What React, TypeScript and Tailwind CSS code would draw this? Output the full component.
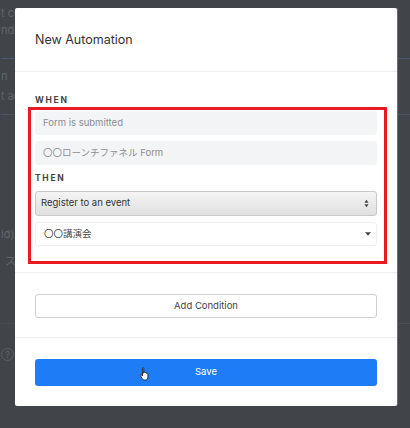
function SortArrows() {
  return (
    <svg width="5" height="9" viewBox="0 0 6 10" className="text-[#444]">
      <path d="M3 0.5 L5.5 4 H0.5 Z" fill="currentColor" />
      <path d="M3 9.5 L5.5 6 H0.5 Z" fill="currentColor" />
    </svg>
  );
}

function HandCursor() {
  return (
    <svg width="12" height="14" viewBox="0 0 12 14">
      <path
        d="M3.5 1.2c0-.7 1.2-.7 1.2 0v5l.3-1c.3-.6 1.2-.5 1.3.1v.6c.3-.6 1.2-.5 1.3.2v.5c.3-.5 1.2-.4 1.3.3v3.2c0 1.6-1 2.9-2.6 2.9H5.4c-1 0-1.6-.5-2.1-1.3L1.3 8.6c-.4-.6.4-1.3 1-.8l1.2 1.2Z"
        fill="#fff"
        stroke="#222"
        strokeWidth="0.9"
      />
    </svg>
  );
}

export default function App() {
  return (
    <div className="relative w-[410px] h-[428px] overflow-hidden bg-[#414449] font-['Inter','Noto_Sans_CJK_JP',sans-serif]">
      {/* page behind the overlay */}
      <div className="flex flex-col text-[11px] leading-none text-[#62656b] pl-[1px]">
        <div className="pt-[8px]">t co</div>
        <div className="pt-[6px]">nd</div>
        <div className="mt-[22px] h-px bg-[#4d5a6c]" />
        <div className="pt-[12px]">n</div>
        <div className="pt-[9px]">t ag</div>
        <div className="mt-[12px] h-px bg-[#4d5560]" />
        <div className="pt-[114px]">ld)</div>
        <div className="pt-[16px] pl-[4px]">ス</div>
        <div className="mt-[56px] h-px bg-[#4b4e54]" />
        <div className="pt-[24px]">
          <span className="flex w-[13px] h-[13px] items-center justify-center rounded-full border border-[#5c5f65] text-[9px]">
            ?
          </span>
        </div>
      </div>

      {/* modal */}
      <div className="absolute left-[15px] top-[8px] w-[382px] h-[398px] bg-white rounded-[2px] shadow-[1px_0_0_#6b6e73] flex flex-col">
        <div className="h-[64px] flex items-center px-[20px] border-b border-[#eeeeee]">
          <h2 className="text-[12.5px] text-[#333] pt-[1px]">New Automation</h2>
        </div>

        <div className="relative px-[20px] pt-[23px] pb-[26px] border-b border-[#eeeeee] flex flex-col">
          <div className="text-[8.5px] leading-[11px] font-bold tracking-[0.2em] text-[#444] mb-[5px]">WHEN</div>
          <div className="h-[24px] rounded-[4px] bg-[#f3f4f6] flex items-center px-[8px] text-[9.5px] text-[#8a8d92]">
            Form is submitted
          </div>
          <div className="mt-[6px] h-[24px] rounded-[4px] bg-[#f3f4f6] flex items-center px-[8px] text-[9.5px] text-[#8a8d92]">
            〇〇ローンチファネル Form
          </div>
          <div className="mt-[8px] text-[8.5px] leading-[11px] font-bold tracking-[0.2em] text-[#444] mb-[7px]">THEN</div>
          <div className="h-[25px] rounded-[3px] border border-[#c9c9c9] bg-gradient-to-b from-[#f4f4f4] to-[#e0e0e0] flex items-center justify-between pl-[5px] pr-[7px] text-[9.5px] text-[#333]">
            <span>Register to an event</span>
            <SortArrows />
          </div>
          <div className="mt-[6px] h-[24px] rounded-[3px] border border-[#eeeeee] bg-white flex items-center justify-between pl-[8px] pr-[5px] text-[9.5px] text-[#444]">
            <span>〇〇講演会</span>
            <svg width="6" height="4" viewBox="0 0 7 4">
              <path d="M0 0 H7 L3.5 4 Z" fill="#444" />
            </svg>
          </div>

          <div className="absolute left-[13px] top-[35px] w-[359px] h-[157px] border-[3px] border-[#ea1a23]" />
        </div>

        <div className="px-[20px] pt-[18px] pb-[19px] border-b border-[#eeeeee]">
          <button className="w-full h-[24px] rounded-[3px] border border-[#cfcfcf] bg-white text-[9.5px] text-[#444]">
            Add Condition
          </button>
        </div>

        <div className="px-[20px] pt-[19px]">
          <button className="relative w-full h-[27px] rounded-[3px] bg-[#1e7cf7] text-[9.5px] text-white">
            Save
            <span className="absolute left-[104px] top-[8px]">
              <HandCursor />
            </span>
          </button>
        </div>
      </div>
    </div>
  );
}
